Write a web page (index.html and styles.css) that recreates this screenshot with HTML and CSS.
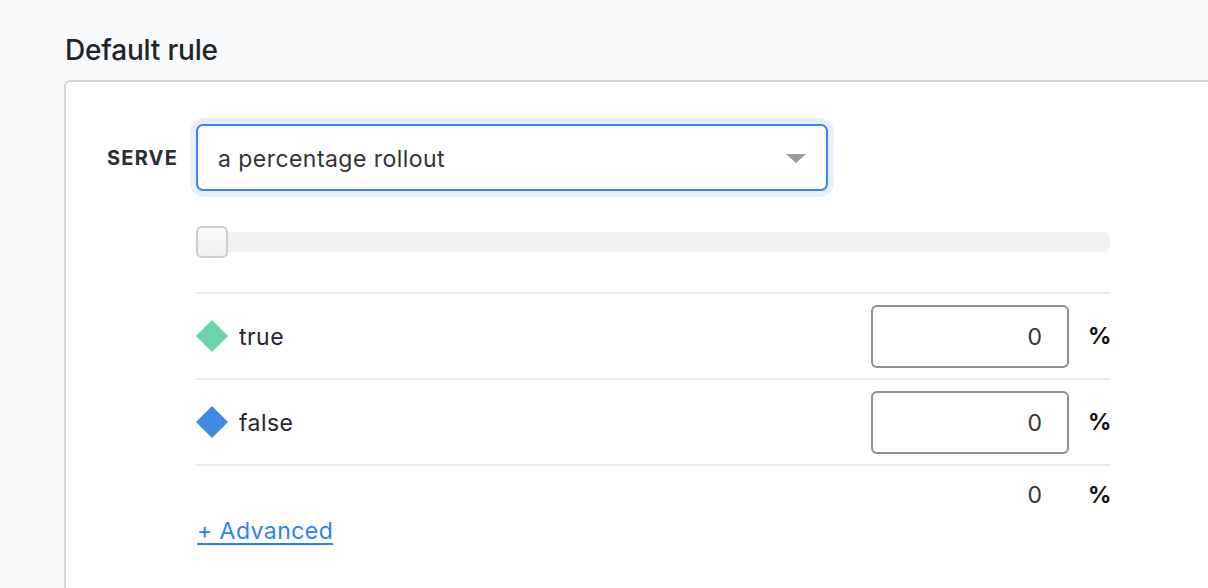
FILE: index.html
```html
<!DOCTYPE html>
<html lang="en">
<head>
<meta charset="utf-8">
<title>Default rule</title>
<link rel="stylesheet" href="styles.css">
</head>
<body>
<div class="page">
  <h2 class="title">Default rule</h2>
  <section class="panel">
    <div class="serve">
      <div class="serve-label">SERVE</div>
      <div class="serve-body">
        <div class="select-ring">
          <div class="select">
            <span class="select-text">a percentage rollout</span>
            <span class="caret"></span>
          </div>
        </div>
        <div class="slider">
          <div class="track"></div>
          <div class="handle"></div>
        </div>
        <div class="variations">
          <div class="var-row">
            <svg class="diamond" width="32" height="32" viewBox="0 0 32 32"><polygon points="16,0 32,16 16,32 0,16" fill="#6dd5ad"/></svg>
            <span class="var-name">true</span>
            <input class="pct-input" type="text" value="0">
            <span class="pct">%</span>
          </div>
          <div class="var-row">
            <svg class="diamond" width="32" height="32" viewBox="0 0 32 32"><polygon points="16,0 32,16 16,32 0,16" fill="#4388e1"/></svg>
            <span class="var-name">false</span>
            <input class="pct-input" type="text" value="0">
            <span class="pct">%</span>
          </div>
          <div class="total-row">
            <span class="total-value">0</span>
            <span class="pct">%</span>
          </div>
        </div>
        <a class="advanced" href="#">+ Advanced</a>
      </div>
    </div>
  </section>
</div>
</body>
</html>
```

FILE: styles.css
```css
html, body {
  margin: 0;
  padding: 0;
  background: #f8f9fa;
  overflow: hidden;
}
body {
  font-family: Inter, "Liberation Sans", sans-serif;
  color: #25282c;
}
.page {
  padding: 32px 0 0 64px;
  height: 588px;
  box-sizing: border-box;
  overflow: hidden;
}
.title {
  margin: 0 0 12px 1px;
  font-size: 28px;
  line-height: 36px;
  font-weight: 500;
  color: #212529;
  letter-spacing: -0.2px;
}
.panel {
  width: 1200px;
  background: #fff;
  border: 2px solid #d2d6db;
  border-radius: 6px 0 0 0;
  padding: 42px 0 60px 41px;
  box-sizing: border-box;
}
.serve {
  display: flex;
  align-items: flex-start;
}
.serve-label {
  width: 89px;
  height: 67px;
  display: flex;
  align-items: center;
  font-size: 20px;
  font-weight: 700;
  letter-spacing: 1.2px;
  color: #2a2d31;
}
.serve-body {
  width: 914px;
}
.select-ring {
  width: 632px;
  border-radius: 8px;
  box-shadow: 0 0 0 6px #e7f0fd;
}
.select {
  height: 67px;
  box-sizing: border-box;
  border: 2px solid #3b86f0;
  border-radius: 7px;
  display: flex;
  align-items: center;
  justify-content: space-between;
  padding: 0 20px 0 20px;
  background: #fff;
}
.select-text {
  font-size: 23px;
  letter-spacing: 0.45px;
  color: #333;
  margin-top: 2px;
}
.caret {
  width: 0;
  height: 0;
  border-left: 10px solid transparent;
  border-right: 10px solid transparent;
  border-top: 9px solid #999;
  margin-top: 2px;
}
.slider {
  position: relative;
  height: 32px;
  margin-top: 35px;
}
.track {
  position: relative;
  top: 6px;
  height: 20px;
  border-radius: 6px;
  background: #f2f2f2;
}
.handle {
  position: absolute;
  left: 0;
  top: 0;
  width: 32px;
  height: 32px;
  box-sizing: border-box;
  border: 2px solid #cdcdcd;
  border-radius: 6px;
  background: linear-gradient(#fafafa, #f1f1f1);
}
.variations {
  margin-top: 34px;
}
.var-row {
  height: 86px;
  box-sizing: border-box;
  border-top: 2px solid #ebebeb;
  display: flex;
  align-items: center;
}
.diamond {
  display: block;
  flex: none;
}
.var-name {
  margin-left: 11px;
  font-size: 23px;
  letter-spacing: 0.45px;
  color: #25282c;
  flex: 1;
  margin-top: 2px;
}
.pct-input {
  width: 198px;
  height: 63px;
  box-sizing: border-box;
  border: 2px solid #8a9099;
  border-radius: 6px;
  padding: 2px 25px 0 10px;
  text-align: right;
  font-family: Inter, "Liberation Sans", sans-serif;
  font-size: 23px;
  color: #333;
  background: #fff;
  outline: none;
}
.pct {
  width: 22px;
  margin-left: 19px;
  font-size: 23px;
  font-weight: 700;
  color: #111;
  text-align: right;
}
.total-row {
  border-top: 2px solid #ebebeb;
  padding-top: 14px;
  display: flex;
  justify-content: flex-end;
  align-items: center;
  line-height: 30px;
}
.total-value {
  width: 198px;
  box-sizing: border-box;
  padding-right: 27px;
  text-align: right;
  font-size: 23px;
  color: #333;
}
.advanced {
  display: inline-block;
  margin-top: 6px;
  margin-left: 1px;
  font-size: 23px;
  letter-spacing: 0.45px;
  line-height: 30px;
  color: #2f80f2;
  text-decoration: underline;
  text-underline-offset: 4px;
}
```
